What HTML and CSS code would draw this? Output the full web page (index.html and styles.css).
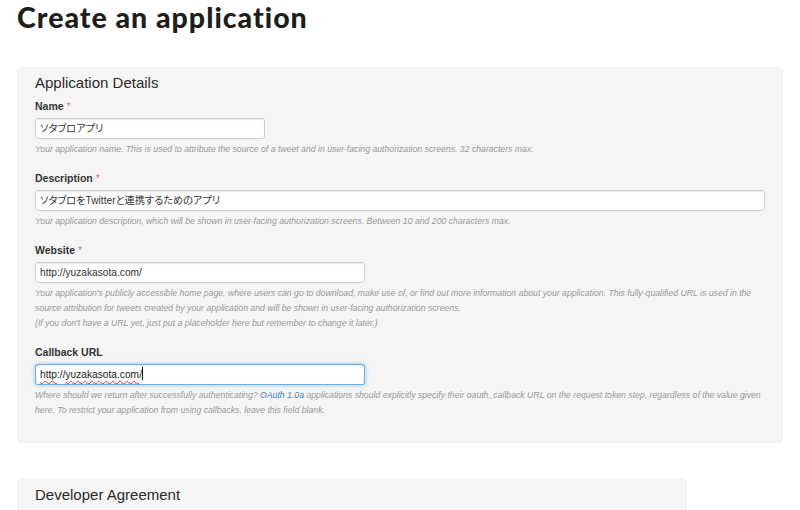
FILE: index.html
```html
<!DOCTYPE html>
<html lang="en">
<head>
<meta charset="utf-8">
<title>Create an application</title>
<link rel="stylesheet" href="styles.css">
</head>
<body>
<div class="page">
  <h1 class="title">Create an application</h1>

  <section class="panel panel-details">
    <h2 class="panel-title">Application Details</h2>

    <div class="group">
      <div class="label">Name <span class="req">*</span></div>
      <div class="field field-name">ソタブロアプリ</div>
      <div class="help">Your application name. This is used to attribute the source of a tweet and in user-facing authorization screens. 32 characters max.</div>
    </div>

    <div class="group">
      <div class="label">Description <span class="req">*</span></div>
      <div class="field field-desc">ソタブロをTwitterと連携するためのアプリ</div>
      <div class="help">Your application description, which will be shown in user-facing authorization screens. Between 10 and 200 characters max.</div>
    </div>

    <div class="group">
      <div class="label">Website <span class="req">*</span></div>
      <div class="field field-url">http://yuzakasota.com/</div>
      <div class="help">Your application's publicly accessible home page, where users can go to download, make use of, or find out more information about your application. This fully-qualified URL is used in the<br>source attribution for tweets created by your application and will be shown in user-facing authorization screens.<br>(If you don't have a URL yet, just put a placeholder here but remember to change it later.)</div>
    </div>

    <div class="group">
      <div class="label">Callback URL</div>
      <div class="field field-url field-focus"><span class="spell">http</span>://<span class="spell">yuzakasota.com</span>/<span class="caret"></span></div>
      <div class="help">Where should we return after successfully authenticating? <span class="link">OAuth 1.0a</span> applications should explicitly specify their oauth_callback URL on the request token step, regardless of the value given<br>here. To restrict your application from using callbacks, leave this field blank.</div>
    </div>
  </section>

  <section class="panel panel-agreement">
    <h2 class="panel-title">Developer Agreement</h2>
  </section>
</div>
</body>
</html>
```

FILE: styles.css
```css
html, body {
  margin: 0;
  padding: 0;
  background: #ffffff;
}

body {
  font-family: "Liberation Sans", Arial, "Noto Sans CJK JP", sans-serif;
  color: #333333;
  overflow: hidden;
}

.page {
  padding-left: 17px;
  width: 766px;
}

.title {
  margin: 0;
  font-family: Lato, "Liberation Sans", sans-serif;
  font-weight: 900;
  font-size: 28.5px;
  line-height: 34px;
  color: #1e1e1e;
  letter-spacing: 1px;
}

.panel {
  background: #f5f5f5;
  border: 1px solid #f0f0f0;
  border-radius: 4px;
  box-sizing: border-box;
  padding: 5px 18px 24px 17px;
}

.panel-details {
  margin-top: 33px;
  width: 766px;
}

.panel-agreement {
  margin-top: 36px;
  width: 670px;
  height: 60px;
}

.panel-title {
  margin: 0 0 6px 0;
  font-size: 15px;
  font-weight: normal;
  line-height: 19px;
  color: #2a2a2a;
}

.group {
  margin-bottom: 13px;
}

.group-wide {
  margin-bottom: 14px;
}

.group:last-child {
  margin-bottom: 0;
}

.label {
  font-size: 10.5px;
  font-weight: bold;
  line-height: 16px;
  margin-bottom: 4px;
  color: #333333;
}

.req {
  color: #e07a70;
  font-weight: normal;
}

.field {
  box-sizing: border-box;
  height: 21px;
  background: #ffffff;
  border: 1px solid #cccccc;
  border-radius: 3px;
  box-shadow: inset 0 1px 1px rgba(0, 0, 0, 0.075);
  padding: 0 4px;
  font-size: 10.2px;
  line-height: 19px;
  color: #333333;
  font-family: "Liberation Sans", Arial, "Noto Sans CJK JP", sans-serif;
  font-feature-settings: "palt";
  white-space: nowrap;
}

.field-name {
  width: 230px;
}

.field-desc {
  width: 730px;
}

.field-url {
  width: 330px;
}

.field-focus {
  border-color: rgba(82, 168, 236, 0.9);
  box-shadow: inset 0 1px 1px rgba(0, 0, 0, 0.075), 0 0 4px rgba(82, 168, 236, 0.6);
  color: #222222;
}

.spell {
  text-decoration: underline wavy #e03030;
  text-decoration-thickness: 1px;
  text-underline-offset: 2px;
}

.caret {
  display: inline-block;
  width: 1px;
  height: 13px;
  background: #111111;
  vertical-align: -2px;
}

.help {
  margin-top: 3px;
  font-size: 8.7px;
  line-height: 15px;
  font-style: italic;
  color: #999999;
  white-space: nowrap;
}

.link {
  color: #3a87b5;
}
```
